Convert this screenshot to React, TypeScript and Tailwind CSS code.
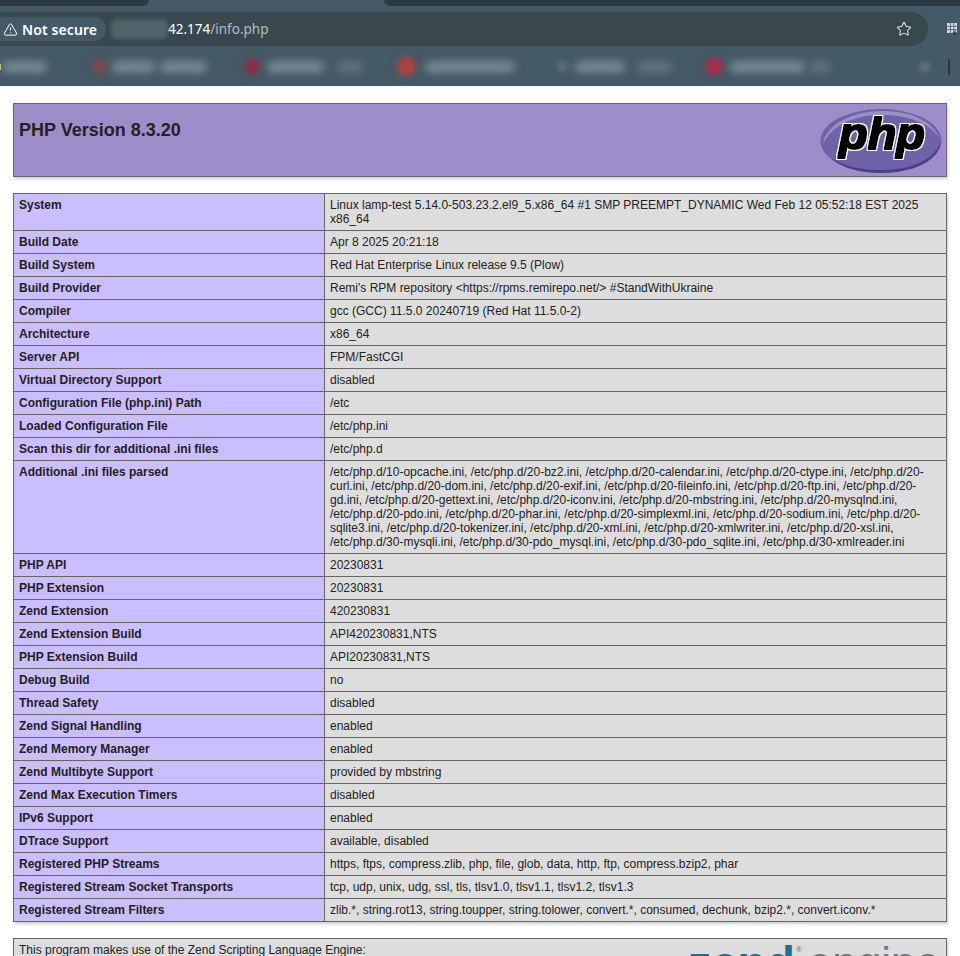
import React from "react";
import { Star, TriangleAlert } from "lucide-react";

const ini1 =
  "/etc/php.d/10-opcache.ini, /etc/php.d/20-bz2.ini, /etc/php.d/20-calendar.ini, /etc/php.d/20-ctype.ini, /etc/php.d/20-curl.ini, /etc/php.d/20-dom.ini, /etc/php.d/20-exif.ini, /etc/php.d/20-fileinfo.ini, /etc/php.d/20-ftp.ini, /etc/php.d/20-gd.ini, /etc/php.d/20-gettext.ini, /etc/php.d/20-iconv.ini, /etc/php.d/20-mbstring.ini, /etc/php.d/20-mysqlnd.ini, /etc/php.d/20-pdo.ini, /etc/php.d/20-phar.ini, /etc/php.d/20-simplexml.ini, /etc/php.d/20-sodium.ini, /etc/php.d/20-sqlite3.ini, /etc/php.d/20-tokenizer.ini, /etc/php.d/20-xml.ini, /etc/php.d/20-xmlwriter.ini, /etc/php.d/20-xsl.ini, /etc/php.d/30-mysqli.ini, /etc/php.d/30-pdo_mysql.ini, /etc/php.d/30-pdo_sqlite.ini, /etc/php.d/30-xmlreader.ini";

const rows: [string, string][] = [
  ["System", "Linux lamp-test 5.14.0-503.23.2.el9_5.x86_64 #1 SMP PREEMPT_DYNAMIC Wed Feb 12 05:52:18 EST 2025 x86_64"],
  ["Build Date", "Apr 8 2025 20:21:18"],
  ["Build System", "Red Hat Enterprise Linux release 9.5 (Plow)"],
  ["Build Provider", "Remi's RPM repository <https://rpms.remirepo.net/> #StandWithUkraine"],
  ["Compiler", "gcc (GCC) 11.5.0 20240719 (Red Hat 11.5.0-2)"],
  ["Architecture", "x86_64"],
  ["Server API", "FPM/FastCGI"],
  ["Virtual Directory Support", "disabled"],
  ["Configuration File (php.ini) Path", "/etc"],
  ["Loaded Configuration File", "/etc/php.ini"],
  ["Scan this dir for additional .ini files", "/etc/php.d"],
  ["Additional .ini files parsed", ini1],
  ["PHP API", "20230831"],
  ["PHP Extension", "20230831"],
  ["Zend Extension", "420230831"],
  ["Zend Extension Build", "API420230831,NTS"],
  ["PHP Extension Build", "API20230831,NTS"],
  ["Debug Build", "no"],
  ["Thread Safety", "disabled"],
  ["Zend Signal Handling", "enabled"],
  ["Zend Memory Manager", "enabled"],
  ["Zend Multibyte Support", "provided by mbstring"],
  ["Zend Max Execution Timers", "disabled"],
  ["IPv6 Support", "enabled"],
  ["DTrace Support", "available, disabled"],
  ["Registered PHP Streams", "https, ftps, compress.zlib, php, file, glob, data, http, ftp, compress.bzip2, phar"],
  ["Registered Stream Socket Transports", "tcp, udp, unix, udg, ssl, tls, tlsv1.0, tlsv1.1, tlsv1.2, tlsv1.3"],
  ["Registered Stream Filters", "zlib.*, string.rot13, string.toupper, string.tolower, convert.*, consumed, dechunk, bzip2.*, convert.iconv.*"],
];

function Blur({ w, ml, dim }: { w: number; ml: number; dim?: boolean }) {
  return (
    <span
      className={dim ? "block h-[10px] shrink-0 rounded-full bg-[#62777f] blur-[4px]" : "block h-[10px] shrink-0 rounded-full bg-[#7d9098] blur-[4px]"}
      style={{ width: w, marginLeft: ml }}
    />
  );
}

function Dot({ color, size, ml }: { color: string; size: number; ml: number }) {
  return (
    <span
      className="block shrink-0 rounded-full blur-[2px]"
      style={{ width: size, height: size, marginLeft: ml, background: color, boxShadow: `0 0 5px 2px ${color}99` }}
    />
  );
}

function PhpLogo() {
  return (
    <svg width="122" height="66" viewBox="0 0 122 66" className="block">
      <defs>
        <filter id="phpOutline" x="-10%" y="-10%" width="120%" height="120%">
          <feMorphology in="SourceAlpha" operator="dilate" radius="2.1" result="outer" />
          <feFlood floodColor="#ffffff" />
          <feComposite in2="outer" operator="in" result="white" />
          <feMorphology in="SourceAlpha" operator="dilate" radius="0.8" result="inner" />
          <feFlood floodColor="#000000" />
          <feComposite in2="inner" operator="in" result="black" />
          <feMerge>
            <feMergeNode in="white" />
            <feMergeNode in="black" />
          </feMerge>
        </filter>
      </defs>
      <ellipse cx="61" cy="33" rx="60.5" ry="32" fill="#6f62a8" />
      <path d="M3 36C6 15 35 3 62 3c28 0 50 9 58 28C110 15 88 7 62 7 34 7 12 17 3 36z" fill="#9a90c4" />
      <path d="M121 33c-2 20-28 32-60 32-20 0-40-5-50-15 14 9 32 12 50 12 32 0 54-11 60-29z" fill="#4b3f8e" />
      <text
        x="62"
        y="41"
        textAnchor="middle"
        fontFamily="'Liberation Sans', Arial, sans-serif"
        fontWeight="700"
        fontStyle="italic"
        fontSize="45"
        textLength="86"
        lengthAdjust="spacingAndGlyphs"
        fill="#000"
        filter="url(#phpOutline)"
      >
        php
      </text>
    </svg>
  );
}

export default function App() {
  return (
    <div className="h-[956px] w-[960px] overflow-hidden bg-white font-['Liberation_Sans',Arial,sans-serif] text-[12px] text-[#222]">
      {/* Browser chrome */}
      <div className="h-[86px] w-full overflow-hidden bg-[#445a66]">
        <div className="flex h-[6px] justify-between">
          <div className="h-[6px] w-[149px] rounded-br-[8px] bg-[#2b3940]" />
          <div className="h-[6px] w-[576px] rounded-bl-[8px] bg-[#2b3940]" />
        </div>
        <div className="mt-[6px] flex h-[34px] items-center">
          <div className="flex h-[34px] w-[928px] items-center rounded-r-[17px] bg-[#39484f]">
            <div className="flex h-[24px] w-[106px] shrink-0 items-center gap-[4px] rounded-r-[12px] bg-[#445a66] pl-[3px] font-['Noto_Sans',sans-serif] text-[14px] font-semibold tracking-[0.1px] text-white">
              <TriangleAlert size={15} strokeWidth={1.6} />
              <span>Not secure</span>
            </div>
            <span className="ml-[5px] block h-[20px] w-[57px] shrink-0 rounded-[6px] bg-[#52636b] blur-[2px]" />
            <span className="font-['Noto_Sans',sans-serif] text-[13.5px] text-white">42.174</span>
            <span className="font-['Noto_Sans',sans-serif] text-[13.5px] text-[#b1bcc1]">/info.php</span>
            <Star size={16} strokeWidth={1.6} className="ml-auto mr-[16px] text-[#d5dcdf]" />
          </div>
          <div className="relative ml-[19px] h-[14px] w-[13px] shrink-0">
            <svg width="13" height="14" viewBox="0 0 13 14" className="block">
              <rect x="0" y="1" width="10" height="10" fill="#d5dcdf" />
              <path d="M3.5 1v10M6.8 1v10M0 4.3h10M0 7.6h10" stroke="#445a66" strokeWidth="0.8" />
              <path d="M8 8.5v5M5.5 11h5" stroke="#2b3940" strokeWidth="1.2" />
            </svg>
          </div>
        </div>
        <div className="flex h-[40px] items-center pt-[1px]">
          <span className="block h-[6px] w-[1px] shrink-0 bg-[#d9c77a]" />
          <Blur w={45} ml={1} />
          <Dot color="#7a4b4c" size={13} ml={46} />
          <Blur w={43} ml={6} />
          <Blur w={47} ml={5} />
          <Dot color="#8e2c44" size={13} ml={39} />
          <Blur w={57} ml={8} />
          <Blur w={26} ml={13} dim />
          <Dot color="#a8443f" size={17} ml={35} />
          <Blur w={90} ml={10} />
          <Dot color="#56717b" size={9} ml={43} />
          <Blur w={50} ml={8} />
          <Blur w={34} ml={13} dim />
          <Dot color="#a82e48" size={15} ml={35} />
          <Blur w={75} ml={8} />
          <Blur w={20} ml={5} dim />
          <Dot color="#5f757e" size={8} ml={91} />
          <span className="ml-[19px] block h-[16px] w-[2px] shrink-0 bg-[#2b3940]" />
        </div>
      </div>

      {/* phpinfo */}
      <div className="flex flex-col px-[13px] pt-[17px]">
        <div className="flex h-[74px] w-[934px] items-start justify-between border border-[#666] bg-[#9d8eca] pr-[4px] shadow-[1px_2px_3px_rgba(0,0,0,0.2)]">
          <h1 className="pl-[5px] pt-[16px] text-[18px] font-bold leading-[21px] text-[#222]">PHP Version 8.3.20</h1>
          <div className="pt-[4px]">
            <PhpLogo />
          </div>
        </div>

        <table className="mt-[16px] w-[934px] table-fixed border-collapse shadow-[1px_2px_3px_rgba(0,0,0,0.2)]">
          <colgroup>
            <col className="w-[311px]" />
            <col />
          </colgroup>
          <tbody>
            {rows.map(([k, v]) => (
              <tr key={k}>
                <td className="border border-[#666] bg-[#cbbeff] px-[5px] py-[4px] align-top text-[12px] font-bold leading-[14px] text-[#222]">{k}</td>
                <td className="border border-[#666] bg-[#dddddd] px-[5px] py-[4px] align-top text-[12px] leading-[14px] text-[#222]">{v}</td>
              </tr>
            ))}
          </tbody>
        </table>

        <div className="mt-[16px] flex h-[80px] w-[934px] items-start justify-between border border-[#666] bg-[#dddddd] pl-[5px] pr-[6px] pt-[4px] shadow-[1px_2px_3px_rgba(0,0,0,0.2)]">
          <span className="text-[12px] leading-[14px]">This program makes use of the Zend Scripting Language Engine:</span>
          <div className="-mt-[2px] flex items-start leading-[44px]">
            <span className="text-[47px] font-bold leading-[44px] text-[#1d6f95]">zend</span>
            <span className="ml-[1px] mt-[5px] text-[8px] leading-[8px] text-[#5f6a70]">®</span>
            <span className="ml-[6px] text-[44px] font-medium leading-[44px] text-[#6b7a82]">engine</span>
          </div>
        </div>
      </div>
    </div>
  );
}
